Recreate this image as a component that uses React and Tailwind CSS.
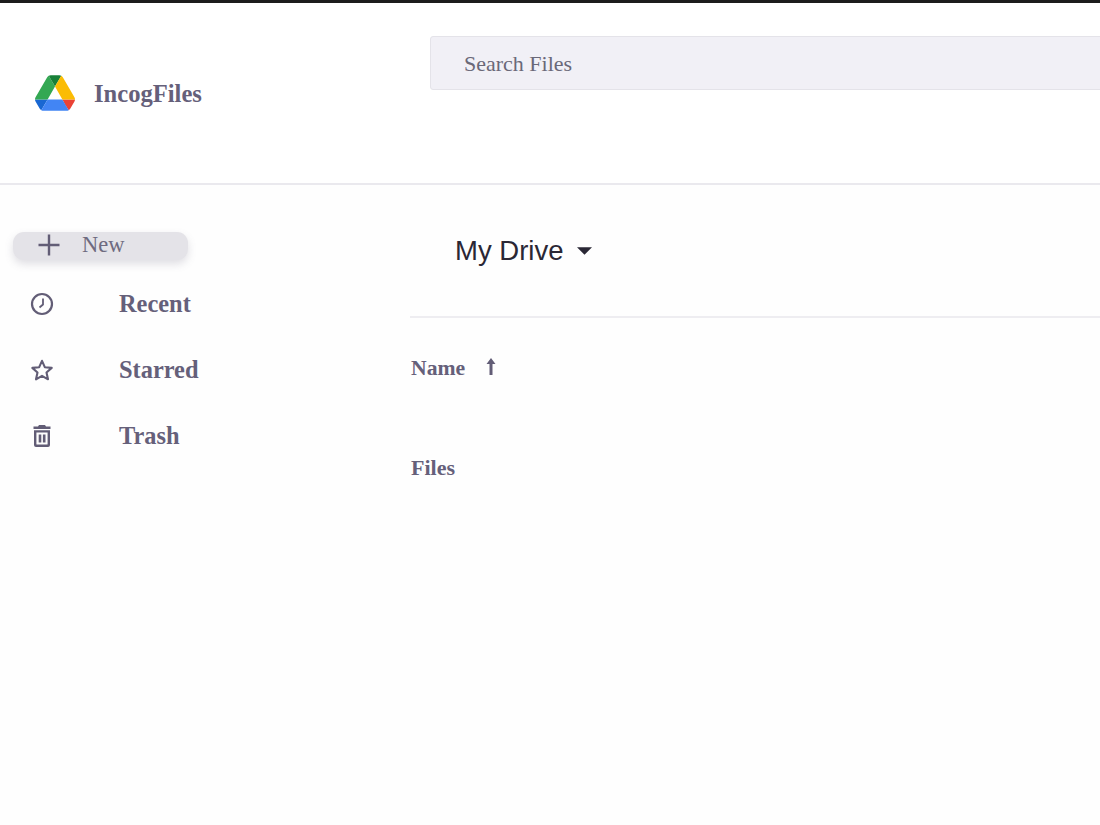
import React from "react";

function DriveLogo() {
  return (
    <svg viewBox="0 0 87.3 78" className="w-[40px] h-[36px] shrink-0 -mt-[1px]">
      <path d="m6.6 66.85 3.85 6.65c.8 1.4 1.95 2.5 3.3 3.3l13.75-23.8h-27.5c0 1.55.4 3.1 1.2 4.5z" fill="#1967d2" />
      <path d="m43.65 25-13.75-23.8c-1.35.8-2.5 1.9-3.3 3.3l-25.4 44a9.06 9.06 0 0 0 -1.2 4.5h27.5z" fill="#34a853" />
      <path d="m73.55 76.8c1.35-.8 2.5-1.9 3.3-3.3l1.6-2.75 7.65-13.25c.8-1.4 1.2-2.95 1.2-4.5h-27.502l5.852 11.5z" fill="#ea4335" />
      <path d="m43.65 25 13.75-23.8c-1.35-.8-2.9-1.2-4.5-1.2h-18.5c-1.6 0-3.15.45-4.5 1.2z" fill="#188038" />
      <path d="m59.8 53h-32.3l-13.75 23.8c1.35.8 2.9 1.2 4.5 1.2h50.8c1.6 0 3.15-.45 4.5-1.2z" fill="#4285f4" />
      <path d="m73.4 26.5-12.7-22c-.8-1.4-1.95-2.5-3.3-3.3l-13.75 23.8 16.15 28h27.45c0-1.55-.4-3.1-1.2-4.5z" fill="#fbbc04" />
    </svg>
  );
}

function ClockIcon() {
  return (
    <svg viewBox="0 0 24 24" className="w-[24px] h-[24px]" fill="none" stroke="#625d76" strokeWidth="2.2">
      <circle cx="12" cy="12" r="10" />
      <path d="M13 6.5V12.500L9.500 15.500" strokeWidth="1.800" />
    </svg>
  );
}

function StarIcon() {
  return (
    <svg viewBox="0 0 24 24" className="w-[24px] h-[24px]" fill="none" stroke="#625d76" strokeWidth="2.1" strokeLinejoin="round">
      <path d="M12 2.800l2.800 6.400 6.900.7-5.200 4.600 1.500 6.800-6-3.500-6 3.500 1.500-6.800-5.200-4.600 6.900-.7z" />
    </svg>
  );
}

function TrashIcon() {
  return (
    <svg viewBox="0 0 24 24" className="w-[24px] h-[24px]" fill="#625d76">
      <path d="M9 1h6l1 1.500h4.500V5h-17V2.500H8z" />
      <path d="M4 6.200h16V21a2 2 0 0 1-2 2H6a2 2 0 0 1-2-2zM6.400 8.600V20a.6.6 0 0 0 .6.6h10a.6.6 0 0 0 .6-.6V8.600z" fillRule="evenodd" />
      <rect x="8.700" y="10.500" width="2.600" height="8" />
      <rect x="12.900" y="10.500" width="2.600" height="8" />
    </svg>
  );
}

function NavItem({ icon, label }) {
  return (
    <div className="flex items-center h-[66px]">
      <div className="w-[119px] pl-[30px] flex items-center shrink-0">{icon}</div>
      <span className="text-[24.400px] font-bold leading-none text-[#65607a]">{label}</span>
    </div>
  );
}

export default function App() {
  return (
    <div className="h-[825px] w-[1100px] overflow-hidden bg-[#fefefe] border-t-[3px] border-[#1c1c1c] font-['Liberation_Serif',serif] text-[#65607a]">
      <header className="flex h-[182px] border-b-2 border-[#eae9ee] bg-white">
        <div className="w-[430px] shrink-0 flex items-center pl-[35px] gap-[19px]">
          <DriveLogo />
          <span className="text-[24.600px] font-bold leading-none pt-[2px]">IncogFiles</span>
        </div>
        <div className="flex-1 pt-[33px]">
          <div className="h-[54px] w-[700px] rounded-l-[3px] bg-[#f1f0f6] border border-[#e4e3e9] flex items-center pl-[33px] text-[22px] text-[#6a6878]">
            Search Files
          </div>
        </div>
      </header>
      <div className="flex">
        <aside className="w-[410px] shrink-0 pt-[47px]">
          <div className="ml-[13px] w-[175px] h-[28px] rounded-[11px] bg-[#e4e3e8] shadow-[0_4px_8px_rgba(98,93,118,0.2)] flex items-center pl-[24px] pb-[2px]">
            <svg viewBox="0 0 24 24" className="w-[24px] h-[24px] shrink-0" fill="none" stroke="#625d76" strokeWidth="2.4">
              <path d="M12 1.500V22.500M1.500 12H22.500" />
            </svg>
            <span className="ml-[21px] text-[22.500px] leading-none text-[#6f6b80]">New</span>
          </div>
          <nav className="mt-[11px]">
            <NavItem icon={<ClockIcon />} label="Recent" />
            <NavItem icon={<StarIcon />} label="Starred" />
            <NavItem icon={<TrashIcon />} label="Trash" />
          </nav>
        </aside>
        <main className="flex-1">
          <div className="h-[133px] border-b-2 border-[#eeedf1] flex items-center pl-[45px]">
            <span className="font-['Liberation_Sans',sans-serif] text-[27.500px] leading-none text-[#2a2735]">My Drive</span>
            <svg viewBox="0 0 16 8" className="w-[15px] h-[8px] ml-[14px]" fill="#2a2735">
              <path d="M0 0H16L8 8Z" />
            </svg>
          </div>
          <div className="h-[100px] pt-[40px] pl-[1px] flex items-start">
            <span className="text-[21.700px] font-bold leading-none">Name</span>
            <svg viewBox="0 0 12 20" className="w-[12px] h-[20px] ml-[20px] -mt-[1px]" fill="#625d76">
              <path d="M6 1L10.500 7H7.500V18H4.500V7H1.500Z" />
            </svg>
          </div>
          <div className="pt-[39px] pl-[1px] text-[22px] font-bold leading-none">Files</div>
        </main>
      </div>
    </div>
  );
}
